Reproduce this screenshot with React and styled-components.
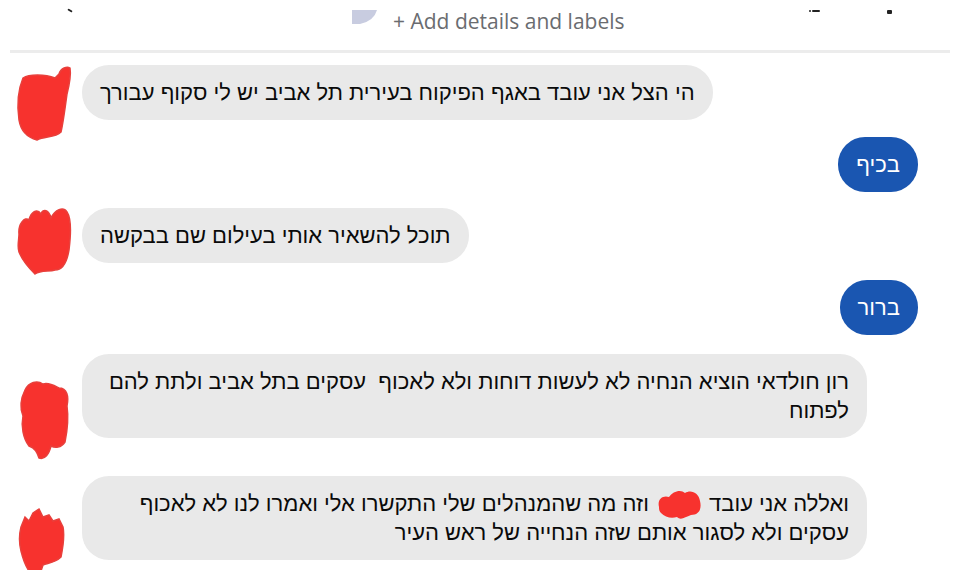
import styled, { createGlobalStyle } from "styled-components";

const GlobalStyle = createGlobalStyle`
  html, body {
    margin: 0;
    background: #fff;
  }
  body {
    font-family: "Liberation Sans", "DejaVu Sans", sans-serif;
  }
`;

const Page = styled.div`
  width: 960px;
  height: 570px;
  overflow: hidden;
  background: #fff;
`;

const Header = styled.div`
  display: flex;
  align-items: flex-start;
  height: 50px;
  padding-left: 59px;
  padding-right: 58px;
  margin: 0 10px;
  border-bottom: 3px solid #ececec;
`;

const Mark = styled.span`
  display: block;
  width: ${(p) => p.w}px;
  height: ${(p) => p.h}px;
  margin-top: ${(p) => p.top}px;
  margin-left: ${(p) => p.ml || 0}px;
  background: #222;
  border-radius: 1px;
  transform: ${(p) => (p.tilt ? "rotate(-60deg)" : "none")};
`;

const Center = styled.div`
  display: flex;
  align-items: flex-start;
  margin-left: 281px;
`;

const Shape = styled.svg`
  margin-top: 10px;
  width: 25px;
  height: 15px;
`;

const AddLabel = styled.span`
  margin-left: 16px;
  margin-top: 7px;
  font-family: "Open Sans", "Liberation Sans", sans-serif;
  font-size: 21px;
  color: #6a6c70;
`;

const RightMarks = styled.div`
  display: flex;
  margin-left: auto;
`;

const List = styled.div`
  display: flex;
  flex-direction: column;
  padding-top: 12px;
`;

const Row = styled.div`
  display: flex;
  align-items: flex-start;
  justify-content: ${(p) => (p.out ? "flex-end" : "flex-start")};
  margin-top: ${(p) => p.gap || 0}px;
  padding-left: ${(p) => (p.out ? 0 : 15)}px;
  padding-right: 42px;
`;

const AvatarSlot = styled.div`
  flex: 0 0 67px;
  height: 0;
  overflow: visible;

  svg {
    display: block;
    margin-top: ${(p) => p.top}px;
    overflow: visible;
  }
`;

const Bubble = styled.div`
  direction: rtl;
  max-width: 749px;
  padding: 13px 18px;
  border-radius: 27px;
  background: ${(p) => (p.out ? "#1a56b1" : "#e9e9e9")};
  color: ${(p) => (p.out ? "#fff" : "#0a0a0a")};
  font-size: 22px;
  line-height: 29px;
  text-align: right;
  white-space: pre-wrap;
`;

const Redact = styled.svg`
  display: inline-block;
  vertical-align: middle;
  width: 48px;
  height: 36px;
  margin: -6px 0;
`;

const RED = "#f7322e";

const avatars = [
  "M8 14 C14 10 30 10 40 14 L44 10 C46 4 52 2 55 4 C56 10 54 22 52 30 C50 45 48 60 46 68 C40 74 30 72 22 76 C14 74 6 68 4 56 C2 42 3 26 8 14 Z",
  "M4 30 C3 20 10 12 14 16 C16 8 22 4 26 10 C28 4 34 6 36 14 C40 6 48 2 52 8 C56 14 56 30 54 46 C52 58 48 66 40 66 C34 68 26 66 20 70 C14 64 8 58 4 48 C2 42 4 36 4 30 Z",
  "M10 14 C14 6 22 4 28 8 C34 6 40 10 44 12 C52 12 54 20 52 30 C54 44 52 56 50 66 C46 72 40 72 36 70 C34 78 30 84 24 82 C22 76 20 72 14 70 C8 62 6 50 8 40 C4 30 6 22 10 14 Z",
  "M6 22 L10 12 L14 16 L18 8 L24 4 L28 12 L34 10 L38 16 L44 14 L48 22 C50 32 48 42 46 52 C40 58 32 58 28 60 L26 66 L14 66 C10 60 8 54 6 46 C4 38 4 30 6 22 Z",
];

function Avatar({ shape, top }) {
  return (
    <AvatarSlot top={top}>
      <svg width="60" height="86" viewBox="0 0 60 86">
        <path d={avatars[shape]} fill={RED} stroke="#e8403c" strokeWidth="1.5" />
      </svg>
    </AvatarSlot>
  );
}

function Incoming({ shape, top, gap, children }) {
  return (
    <Row gap={gap}>
      <Avatar shape={shape} top={top} />
      <Bubble>{children}</Bubble>
    </Row>
  );
}

function Outgoing({ gap, children }) {
  return (
    <Row out gap={gap}>
      <Bubble out>{children}</Bubble>
    </Row>
  );
}

export default function App() {
  return (
    <Page>
      <GlobalStyle />
      <Header>
        <Mark w={2} h={5} top={8} tilt />
        <Center>
          <Shape viewBox="0 0 25 15">
            <path d="M0 0 H25 Q22 11 8 14 H0 Z" fill="#c8cce0" />
          </Shape>
          <AddLabel>+ Add details and labels</AddLabel>
        </Center>
        <RightMarks>
          <Mark w={2} h={2} top={10} />
          <Mark w={8} h={2} top={10} ml={1} />
          <Mark w={5} h={4} top={10} ml={67} />
        </RightMarks>
      </Header>
      <List>
        <Incoming shape={0} top={-1}>
          הי הצל אני עובד באגף הפיקוח בעירית תל אביב יש לי סקוף עבורך
        </Incoming>
        <Outgoing gap={17}>בכיף</Outgoing>
        <Incoming shape={1} top={-4} gap={16}>
          תוכל להשאיר אותי בעילום שם בבקשה
        </Incoming>
        <Outgoing gap={17}>ברור</Outgoing>
        <Incoming shape={2} top={22} gap={19}>
          {"רון חולדאי הוציא הנחיה לא לעשות דוחות ולא לאכוף  עסקים בתל אביב ולתת להם לפתוח"}
        </Incoming>
        <Incoming shape={3} top={29} gap={38}>
          {"ואללה אני עובד "}
          <Redact viewBox="0 0 48 36">
            <path
              d="M4 20 C2 12 8 8 14 10 C18 4 26 2 30 6 C36 2 44 6 45 14 C47 22 44 28 36 28 C30 30 26 34 22 30 C16 32 10 30 6 26 C4 24 4 22 4 20 Z"
              fill={RED}
            />
          </Redact>
          {" וזה מה שהמנהלים שלי התקשרו אלי ואמרו לנו לא לאכוף עסקים ולא לסגור אותם שזה הנחייה של ראש העיר"}
        </Incoming>
      </List>
    </Page>
  );
}
